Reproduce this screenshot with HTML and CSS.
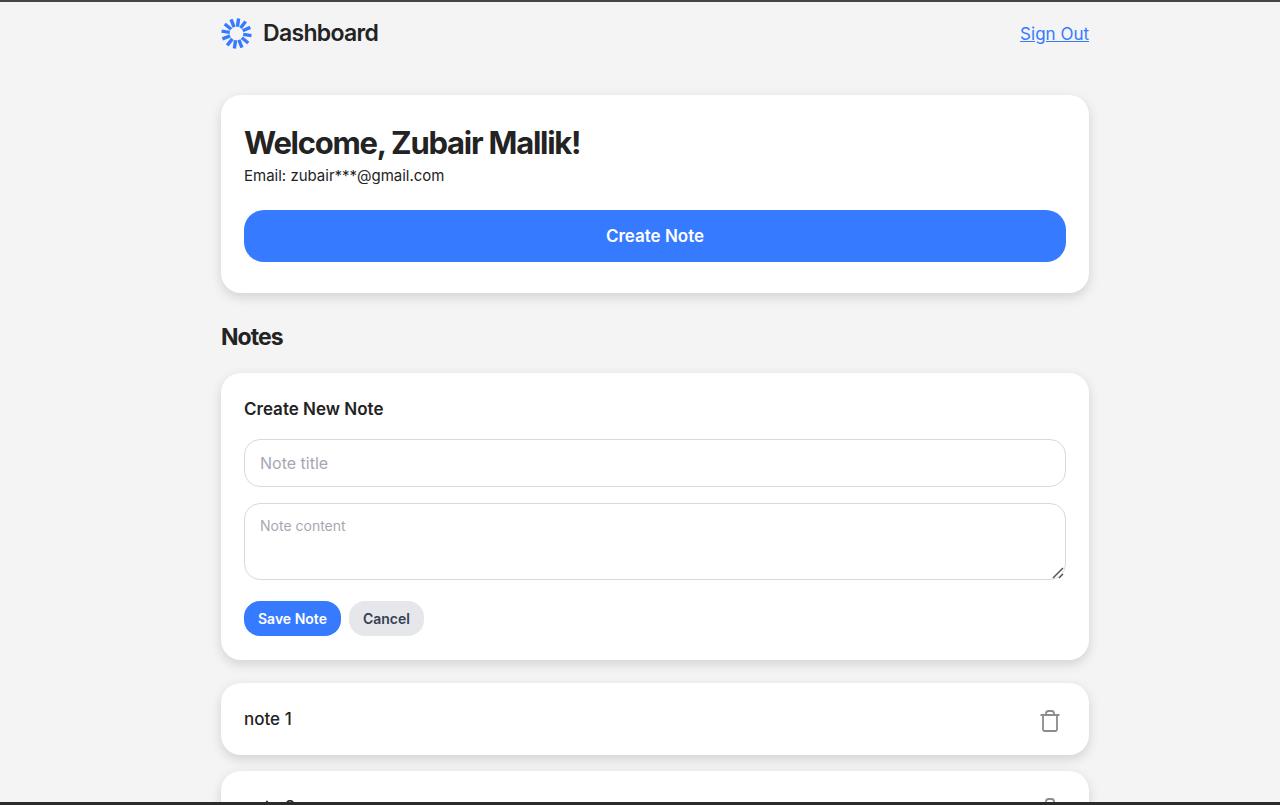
FILE: index.html
```html
<!DOCTYPE html>
<html lang="en">
<head>
<meta charset="utf-8">
<meta name="viewport" content="width=device-width, initial-scale=1">
<title>Dashboard</title>
<link rel="stylesheet" href="styles.css">
</head>
<body>
<div class="page">
  <header class="topbar">
    <div class="brand">
      <svg class="logo" viewBox="-16 -16 32 32" aria-hidden="true">
        <defs><line id="ray" x1="0" y1="-7" x2="0" y2="-15.6"/></defs>
        <g stroke="#367aff" stroke-width="3.5">
          <use href="#ray" transform="rotate(8)"/>
          <use href="#ray" transform="rotate(37)"/>
          <use href="#ray" transform="rotate(66)"/>
          <use href="#ray" transform="rotate(98)"/>
          <use href="#ray" transform="rotate(129)"/>
          <use href="#ray" transform="rotate(159)"/>
          <use href="#ray" transform="rotate(188)"/>
          <use href="#ray" transform="rotate(218)"/>
          <use href="#ray" transform="rotate(249)"/>
          <use href="#ray" transform="rotate(279)"/>
          <use href="#ray" transform="rotate(309)"/>
          <use href="#ray" transform="rotate(339)"/>
        </g>
      </svg>
      <h1 class="brand-name">Dashboard</h1>
    </div>
    <a class="sign-out" href="#">Sign Out</a>
  </header>

  <main>
    <section class="card welcome">
      <h2 class="welcome-title">Welcome, Zubair Mallik!</h2>
      <p class="email">Email: zubair***@gmail.com</p>
      <button class="create" type="button">Create Note</button>
    </section>

    <h2 class="notes-heading">Notes</h2>

    <form class="card editor">
      <h3 class="editor-title">Create New Note</h3>
      <input class="field title-field" type="text" placeholder="Note title" aria-label="Note title">
      <div class="content-wrap">
        <textarea class="field content-field" placeholder="Note content" aria-label="Note content"></textarea>
        <svg class="grip" viewBox="0 0 12 12" aria-hidden="true"><path d="M1 11L11 1M7 11l4-4"/></svg>
      </div>
      <div class="actions">
        <button class="small save" type="button">Save Note</button>
        <button class="small cancel" type="button">Cancel</button>
      </div>
    </form>

    <ul class="notes">
      <li class="card note">
        <span>note 1</span>
        <button class="delete" type="button" aria-label="Delete note 1">
          <svg class="trash" viewBox="0 0 20 22" aria-hidden="true"><path d="M.5 5h19M3 5v14.5A1.5 1.5 0 0 0 4.500 21h11a1.500 1.500 0 0 0 1.500-1.500V5M6 5V3.500Q6 1 8.500 1h3Q14 1 14 3.500V5"/></svg>
        </button>
      </li>
      <li class="card note">
        <span>note 2</span>
        <button class="delete" type="button" aria-label="Delete note 2">
          <svg class="trash" viewBox="0 0 20 22" aria-hidden="true"><path d="M.5 5h19M3 5v14.5A1.5 1.5 0 0 0 4.500 21h11a1.500 1.500 0 0 0 1.500-1.500V5M6 5V3.500Q6 1 8.500 1h3Q14 1 14 3.500V5"/></svg>
        </button>
      </li>
    </ul>
  </main>
</div>
</body>
</html>
```
FILE: styles.css
```css
* { box-sizing: border-box; }

body {
  margin: 0;
  height: 100vh;
  overflow: hidden;
  background: #f4f4f4;
  border-top: 2px solid #444;
  border-bottom: 3px solid #2b2b2b;
  color: #232323;
  font-family: Inter, "Liberation Sans", sans-serif;
}

h1, h2, h3, p, ul { margin: 0; padding: 0; }

button, input, textarea { font-family: inherit; }

button { border: 0; cursor: pointer; }

.page {
  height: 100%;
  overflow: hidden;
  max-width: 946px;
  margin: 0 auto;
  padding: 15px 24px 0 54px;
}

.topbar {
  display: flex;
  align-items: center;
  justify-content: space-between;
  margin-bottom: 46px;
}

.brand { display: flex; align-items: center; gap: 11px; }

.logo { width: 31px; height: 31px; }

.brand-name {
  font-size: 23px;
  line-height: 32px;
  font-weight: 600;
  letter-spacing: -0.03em;
}

.sign-out {
  padding-top: 2px;
  color: #367aff;
  font-size: 17px;
  line-height: 24px;
}

.card {
  background: #fff;
  border-radius: 20px;
  box-shadow: 0 4px 12px rgba(0, 0, 0, 0.14);
}

.welcome { padding: 28px 23px 31px; }

.welcome-title {
  font-size: 31px;
  line-height: 40px;
  font-weight: 700;
  letter-spacing: -0.04em;
}

.email { padding-top: 1px; font-size: 15px; line-height: 24px; }

.create {
  display: block;
  width: 100%;
  height: 52px;
  margin-top: 22px;
  border-radius: 20px;
  background: #367aff;
  color: #fff;
  font-size: 17px;
  font-weight: 600;
}

.notes-heading {
  margin: 28px 0 20px;
  font-size: 23px;
  line-height: 32px;
  font-weight: 700;
  letter-spacing: -0.04em;
}

.editor { padding: 24px 23px; }

.editor-title {
  margin-bottom: 18px;
  font-size: 17px;
  line-height: 24px;
  font-weight: 600;
}

.field {
  display: block;
  width: 100%;
  border: 1px solid #d9d9d9;
  border-radius: 16px;
  background: #fff;
  color: #232323;
}

.field::placeholder { color: #a5a8b3; }

.title-field { height: 48px; padding: 0 15px; font-size: 16px; }

.content-wrap { position: relative; margin-top: 16px; }

.content-field {
  height: 77px;
  padding: 14px 15px;
  font-size: 14px;
  line-height: 16px;
  resize: none;
}

.grip {
  position: absolute;
  right: 2px;
  bottom: 1px;
  width: 12px;
  height: 12px;
  fill: none;
  stroke: #555;
  stroke-width: 1.5;
}

.actions { display: flex; gap: 8px; margin-top: 21px; }

.small {
  height: 35px;
  padding: 0 14px;
  border-radius: 16px;
  font-size: 14px;
  font-weight: 600;
}

.save { background: #367aff; color: #fff; }

.cancel { background: #e5e7eb; color: #374151; }

.notes {
  display: grid;
  gap: 16px;
  margin-top: 23px;
  list-style: none;
}

.note {
  display: flex;
  align-items: center;
  justify-content: space-between;
  height: 72px;
  padding: 0 25px 0 23px;
  font-size: 17px;
  font-weight: 500;
}

.delete { display: flex; padding: 8px 4px 4px; background: transparent; }

.trash {
  width: 20px;
  height: 22px;
  fill: none;
  stroke: #8c8c8c;
  stroke-width: 1.8;
}
```
